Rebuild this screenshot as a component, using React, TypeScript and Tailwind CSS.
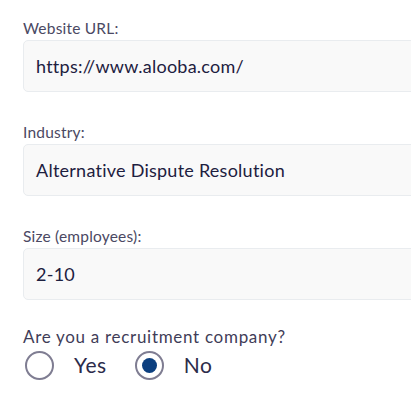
import React, { useState } from 'react';

const fields = [
  { label: 'Website URL:', value: 'https://www.alooba.com/' },
  { label: 'Industry:', value: 'Alternative Dispute Resolution' },
  { label: 'Size (employees):', value: '2-10' },
];

function Radio({ checked, label, onClick }: { checked: boolean; label: string; onClick: () => void }) {
  return (
    <button type="button" onClick={onClick} className="flex items-center gap-[20px]">
      <span className="flex h-[29px] w-[29px] items-center justify-center rounded-full border-2 border-[#7f7d92] bg-white">
        {checked && <span className="h-[15px] w-[15px] rounded-full bg-[#0c3f7f]" />}
      </span>
      <span className="text-[21px] leading-8 tracking-[0.6px] text-[#2c2b4a]">{label}</span>
    </button>
  );
}

export default function App() {
  const [recruiter, setRecruiter] = useState(false);

  return (
    <div className="h-[404px] w-[411px] overflow-hidden bg-white" style={{ fontFamily: 'Lato, "Open Sans", sans-serif' }}>
      <div className="flex w-[460px] flex-col gap-[30px] pl-[23px] pt-[18px]">
        {fields.map((f) => (
          <div key={f.label} className="flex flex-col">
            <label className="mb-[2px] text-[15.5px] leading-5 tracking-[0.2px] text-[#4b4963]">{f.label}</label>
            <div className="flex h-[52px] items-center rounded-[5px] border border-[#e9ecef] bg-[#f9f9f9] px-[12px] text-[18px] tracking-[0.25px] text-[#1d2040]">
              {f.value}
            </div>
          </div>
        ))}
      </div>
      <div className="mt-[25px] pl-[23px]">
        <p className="text-[17px] leading-6 tracking-[0.7px] text-[#3f3d58]">Are you a recruitment company?</p>
        <div className="flex items-center gap-[28px] pl-[2px]">
          <Radio checked={recruiter} label="Yes" onClick={() => setRecruiter(true)} />
          <Radio checked={!recruiter} label="No" onClick={() => setRecruiter(false)} />
        </div>
      </div>
    </div>
  );
}
